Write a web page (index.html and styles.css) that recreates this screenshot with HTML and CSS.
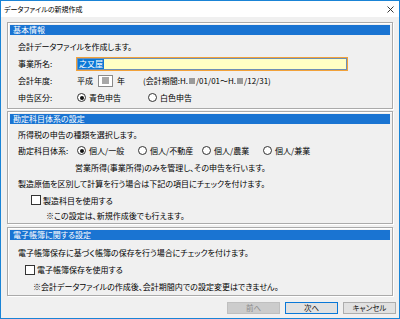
FILE: index.html
```html
<!DOCTYPE html>
<html lang="ja">
<head>
<meta charset="utf-8">
<title>データファイルの新規作成</title>
<link rel="stylesheet" href="styles.css">
</head>
<body>
<div class="window">
  <div class="titlebar">
    <span class="title">データファイルの新規作成</span>
    <svg class="close" width="7" height="7" viewBox="0 0 7 7"><path d="M0.5 0.5 L6.5 6.5 M6.5 0.5 L0.5 6.5" stroke="#222" stroke-width="0.9" fill="none"/></svg>
  </div>
  <div class="body">
    <section class="group g1">
      <div class="ghead">基本情報</div>
      <div class="gbody">
        <div class="row">会計データファイルを作成します。</div>
        <div class="row"><span class="label">事業所名:</span><span class="textbox"><span class="sel">之又屋</span></span></div>
        <div class="row"><span class="label">会計年度:</span><span class="era">平成</span><span class="yearbox"><span class="mask"></span></span><span class="nen">年</span><span class="period">(会計期間:H.<span class="sq"></span>/01/01～H.<span class="sq"></span>/12/31)</span></div>
        <div class="row"><span class="label">申告区分:</span><span class="opt w71"><span class="radio on"></span>青色申告</span><span class="opt"><span class="radio"></span>白色申告</span></div>
      </div>
    </section>
    <section class="group g2">
      <div class="ghead">勘定科目体系の設定</div>
      <div class="gbody">
        <div class="row h16">所得税の申告の種類を選択します。</div>
        <div class="row h17"><span class="label">勘定科目体系:</span><span class="opt w61"><span class="radio on"></span>個人/一般</span><span class="opt w64"><span class="radio"></span>個人/不動産</span><span class="opt w61"><span class="radio"></span>個人/農業</span><span class="opt"><span class="radio"></span>個人/兼業</span></div>
        <div class="row h16 ind57">営業所得(事業所得)のみを管理し、その申告を行います。</div>
        <div class="row h17">製造原価を区別して計算を行う場合は下記の項目にチェックを付けます。</div>
        <div class="row h16 ind13"><span class="check"></span>製造科目を使用する</div>
        <div class="row h14 ind28">※この設定は、新規作成後でも行えます。</div>
      </div>
    </section>
    <section class="group g3">
      <div class="ghead">電子帳簿に関する設定</div>
      <div class="gbody">
        <div class="row">電子帳簿保存に基づく帳簿の保存を行う場合にチェックを付けます。</div>
        <div class="row ind7"><span class="check"></span>電子帳簿保存を使用する</div>
        <div class="row h16 ind15">※会計データファイルの作成後、会計期間内での設定変更はできません。</div>
      </div>
    </section>
    <div class="buttons">
      <button class="btn disabled" disabled>前へ</button>
      <button class="btn default">次へ</button>
      <button class="btn">キャンセル</button>
    </div>
  </div>
</div>
</body>
</html>
```
FILE: styles.css
```css
* { box-sizing: border-box; }
html, body { margin: 0; padding: 0; }
body {
  font-family: "Noto Sans CJK JP", sans-serif;
  font-size: 8px;
  font-feature-settings: "palt";
  color: #000;
  background: #ffffff;
}
.window {
  width: 400px;
  height: 319px;
  border: 1px solid #1a84d6;
  display: flex;
  flex-direction: column;
  background: #f0f0f0;
}
.titlebar {
  height: 16px;
  background: #ffffff;
  display: flex;
  align-items: center;
  justify-content: space-between;
  padding: 0 5px 0 3px;
  flex: none;
}
.title { font-size: 7px; line-height: 1; }
.close { display: block; }
.body {
  flex: 1;
  padding: 5px 6px 0 6px;
  display: flex;
  flex-direction: column;
}
.group {
  border: 1px solid #aaaaaa;
  box-shadow: inset 1px 1px 0 #ffffff, 1px 1px 0 #ffffff;
  padding: 2px 2px 1px 2px;
}
.g2 { margin-top: 2px; }
.g3 { margin-top: 3px; }
.ghead {
  height: 10px;
  background: #1a74d2;
  color: #ffffff;
  line-height: 10px;
  padding-left: 3px;
}
.gbody { padding: 3px 0 1px 8px; }
.g2 .gbody { padding-top: 2px; padding-bottom: 0; }
.g3 .gbody { padding-top: 4px; padding-bottom: 0; }
.row {
  height: 17px;
  display: flex;
  align-items: center;
  white-space: nowrap;
}
.h14 { height: 14px; }
.h16 { height: 16px; }
.h17 { height: 17px; }
.ind7 { padding-left: 7px; }
.ind13 { padding-left: 13px; }
.ind15 { padding-left: 15px; }
.ind28 { padding-left: 28px; }
.ind57 { padding-left: 57px; }
.label { width: 58px; flex: none; }
.textbox {
  width: 272px;
  height: 14px;
  background: #ffffc4;
  border: 1px solid #f2a23a;
  box-shadow: inset 0 0 0 1px #6f8fb5;
  display: flex;
  align-items: center;
  padding-left: 1px;
}
.sel {
  background: #0a78d7;
  color: #ffffff;
  line-height: 10px;
  height: 10px;
  padding: 0 1px;
}
.era { margin-left: 1px; }
.yearbox {
  width: 15px;
  height: 12px;
  margin-left: 5px;
  border: 1px solid #8a8a8a;
  background: #ffffff;
  display: flex;
  align-items: center;
  justify-content: center;
}
.mask { width: 7px; height: 7px; background: #a8a8a8; }
.nen { margin-left: 4px; }
.period { margin-left: 18px; display: inline-flex; align-items: center; }
.sq { display: inline-block; width: 6px; height: 6px; background: #9a9a9a; margin: 0 1px; }
.opt { display: inline-flex; align-items: center; flex: none; margin-left: 1px; }
.opt + .opt { margin-left: 0; }
.w61 { width: 61px; }
.w64 { width: 64px; }
.w71 { width: 71px; }
.radio {
  width: 9px;
  height: 9px;
  border: 1px solid #333333;
  border-radius: 50%;
  background: #ffffff;
  margin-right: 3px;
  display: inline-flex;
  align-items: center;
  justify-content: center;
  flex: none;
}
.radio.on::after {
  content: "";
  width: 4px;
  height: 4px;
  border-radius: 50%;
  background: #111111;
}
.check {
  width: 10px;
  height: 10px;
  border: 1px solid #333333;
  background: #ffffff;
  margin-right: 2px;
  flex: none;
}
.buttons {
  display: flex;
  justify-content: flex-end;
  gap: 5px;
  margin: 6px -3px 0 0;
}
.btn {
  width: 53px;
  height: 12px;
  padding: 0;
  font-family: inherit;
  font-size: 7.5px;
  font-feature-settings: "palt";
  line-height: 10px;
  color: #111;
  background: #e1e1e1;
  border: 1px solid #adadad;
  border-radius: 0;
}
.btn.default { border-color: #0a78d7; }
.btn.disabled { background: #cccccc; border-color: #bfbfbf; color: #8c8c8c; }
```
